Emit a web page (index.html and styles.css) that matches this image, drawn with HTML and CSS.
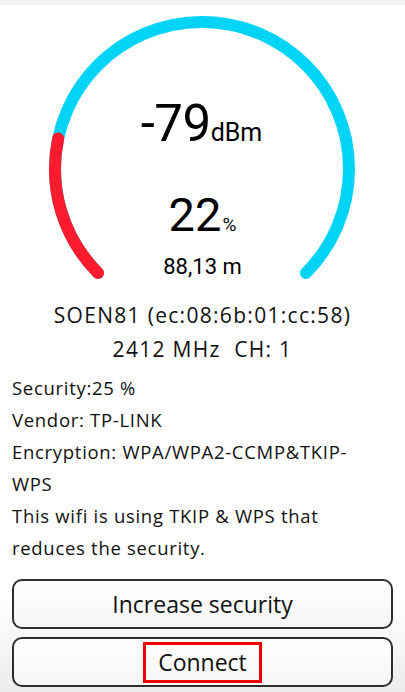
FILE: index.html
```html
<!DOCTYPE html>
<html lang="en">
<head>
<meta charset="utf-8">
<link rel="stylesheet" href="styles.css">
</head>
<body>
<div class="topbar"></div>
<main class="screen">
  <section class="gauge">
    <svg class="gauge-arc" viewBox="0 0 405 298" width="405" height="298" aria-hidden="true">
      <path d="M 98.06 272.94 A 147 147 0 1 1 305.94 272.94" fill="none" stroke="#00d4f6" stroke-width="12" stroke-linecap="round"/>
      <path d="M 98.06 272.94 A 147 147 0 0 1 58.2 138.4" fill="none" stroke="#fd1b2d" stroke-width="12" stroke-linecap="round"/>
    </svg>
    <div class="dbm"><span class="big">-79</span><span class="unit">dBm</span></div>
    <div class="pct"><span class="big2">22</span><span class="unit2">%</span></div>
    <div class="dist">88,13 m</div>
  </section>
  <section class="ident">
    <div class="ident-line">SOEN81 (ec:08:6b:01:cc:58)</div>
    <div class="ident-line">2412 MHz&nbsp; CH: 1</div>
  </section>
  <section class="details">
    <p>Security:25 %</p>
    <p>Vendor: TP-LINK</p>
    <p>Encryption: WPA/WPA2-CCMP&amp;TKIP-<br>WPS</p>
    <p>This wifi is using TKIP &amp; WPS that<br>reduces the security.</p>
  </section>
  <section class="actions">
    <button class="btn">Increase security</button>
    <button class="btn"><span class="highlight">Connect</span></button>
  </section>
</main>
</body>
</html>
```

FILE: styles.css
```css
html, body {
  margin: 0;
  padding: 0;
}
body {
  width: 405px;
  height: 692px;
  overflow: hidden;
  background: linear-gradient(to bottom, #ffffff 0, #ffffff 600px, #ececec 692px);
  font-family: "Open Sans", "Noto Sans", sans-serif;
  color: #111;
}
.topbar {
  height: 5px;
  background: #f1f3f3;
}
.screen {
  display: flex;
  flex-direction: column;
}
.gauge {
  position: relative;
  height: 293px;
  display: flex;
  flex-direction: column;
  align-items: center;
  font-family: Roboto, sans-serif;
  color: #000;
}
.gauge-arc {
  position: absolute;
  left: 0;
  top: -5px;
}
.dbm {
  position: relative;
  margin-top: 91px;
  font-size: 51px;
  line-height: 56px;
  white-space: nowrap;
  padding-right: 2px;
}
.big {
  letter-spacing: -0.5px;
}
.unit {
  font-size: 25px;
  line-height: 1;
}
.pct {
  position: relative;
  margin-top: 37px;
  font-size: 47px;
  line-height: 52px;
  white-space: nowrap;
}
.unit2 {
  font-size: 19px;
  line-height: 1;
  margin-left: 1px;
}
.dist {
  position: relative;
  margin-top: 13px;
  font-size: 22px;
  line-height: 26px;
}
.ident {
  display: flex;
  flex-direction: column;
  align-items: center;
}
.ident-line {
  font-size: 21px;
  line-height: 34px;
  letter-spacing: 1.3px;
  white-space: nowrap;
}
.details {
  margin-top: 6px;
  padding: 0 12px;
}
.details p {
  margin: 0;
  font-size: 18.5px;
  line-height: 32px;
  letter-spacing: 0.7px;
}
.actions {
  margin-top: 15px;
  padding: 0 12px;
  display: flex;
  flex-direction: column;
  gap: 8px;
}
.btn {
  height: 50px;
  border: 2px solid #2e2e2e;
  border-radius: 10px;
  background: linear-gradient(to bottom, #ffffff, #f6f6f6);
  font-family: "Open Sans", "Noto Sans", sans-serif;
  font-size: 23px;
  color: #111;
  display: flex;
  align-items: center;
  justify-content: center;
  padding: 0;
}
.highlight {
  border: 3px solid #ee0000;
  padding: 0 12px;
  line-height: 35px;
}
```
